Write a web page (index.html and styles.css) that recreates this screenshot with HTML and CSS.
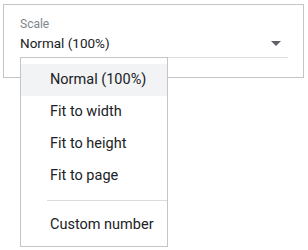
FILE: index.html
```html
<!DOCTYPE html>
<html lang="en">
<head>
  <meta charset="UTF-8">
  <meta name="viewport" content="width=device-width, initial-scale=1.0">
  <title>Scale</title>
  <link rel="stylesheet" href="styles.css">
</head>
<body>
  <div class="page">
    <div class="scale-card">
      <div class="scale-label">Scale</div>
      <div class="scale-select">
        <span class="scale-value">Normal (100%)</span>
        <span class="scale-arrow"></span>
      </div>

      <!-- open dropdown -->
      <div class="scale-menu">
        <div class="menu-item selected">Normal (100%)</div>
        <div class="menu-item">Fit to width</div>
        <div class="menu-item">Fit to height</div>
        <div class="menu-item">Fit to page</div>
        <div class="menu-separator"></div>
        <div class="menu-item">Custom number</div>
      </div>
    </div>
  </div>
</body>
</html>
```

FILE: styles.css
```css
html,
body {
  margin: 0;
  background: #ffffff;
}

body {
  font-family: Roboto, Arial, sans-serif;
  color: #202124;
}

.page {
  height: 250px;
  padding-top: 4px;
  box-sizing: border-box;
}

.scale-card {
  position: relative;
  box-sizing: border-box;
  width: 301px;
  height: 74px;
  margin-left: 3px;
  padding: 11px 15px 0 16px;
  border: 1px solid #c4c4c4;
}

.scale-label {
  font-size: 12px;
  line-height: 16px;
  color: #80868b;
}

.scale-select {
  display: flex;
  align-items: center;
  justify-content: space-between;
  width: 268px;
  margin-top: 1px;
  padding-bottom: 4px;
  border-bottom: 1px solid #dadce0;
}

.scale-value {
  font-size: 13.5px;
  line-height: 20px;
}

.scale-arrow {
  width: 0;
  height: 0;
  margin-right: 7px;
  border-left: 5px solid transparent;
  border-right: 5px solid transparent;
  border-top: 5px solid #5f6368;
}

.scale-menu {
  position: absolute;
  top: 52px;
  left: 16px;
  box-sizing: border-box;
  width: 148px;
  padding: 6px 0 5px;
  background: #ffffff;
  border: 1px solid #c4c4c4;
}

.menu-item {
  height: 32px;
  line-height: 32px;
  padding-left: 29px;
  font-size: 14.5px;
  white-space: nowrap;
}

.menu-item.selected {
  background: #f1f3f4;
}

.menu-separator {
  height: 1px;
  margin: 8px 0 8px 26px;
  background: #dadce0;
}
```
